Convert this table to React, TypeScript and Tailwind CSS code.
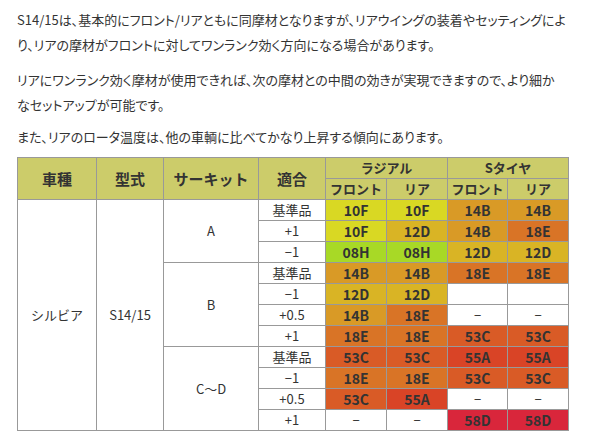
import React from "react";

type Row = { fit: string; cells: string[] };
type Group = { circuit: string; rows: Row[] };

const groups: Group[] = [
  {
    circuit: "A",
    rows: [
      { fit: "基準品", cells: ["10F", "10F", "14B", "14B"] },
      { fit: "+1", cells: ["10F", "12D", "14B", "18E"] },
      { fit: "−1", cells: ["08H", "08H", "12D", "12D"] },
    ],
  },
  {
    circuit: "B",
    rows: [
      { fit: "基準品", cells: ["14B", "14B", "18E", "18E"] },
      { fit: "−1", cells: ["12D", "12D", "", ""] },
      { fit: "+0.5", cells: ["14B", "18E", "−", "−"] },
      { fit: "+1", cells: ["18E", "18E", "53C", "53C"] },
    ],
  },
  {
    circuit: "C〜D",
    rows: [
      { fit: "基準品", cells: ["53C", "53C", "55A", "55A"] },
      { fit: "−1", cells: ["18E", "18E", "53C", "53C"] },
      { fit: "+0.5", cells: ["53C", "55A", "−", "−"] },
      { fit: "+1", cells: ["−", "−", "58D", "58D"] },
    ],
  },
];

// pad colours
const padBg: Record<string, string> = {
  "08H": "bg-[#a8d926]",
  "10F": "bg-[#d9d823]",
  "12D": "bg-[#d9b425]",
  "14B": "bg-[#d99a26]",
  "18E": "bg-[#d97426]",
  "53C": "bg-[#d95b26]",
  "55A": "bg-[#d94426]",
  "58D": "bg-[#d9263b]",
};

const totalRows = groups.reduce((n, g) => n + g.rows.length, 0);
const td = "border border-[#999] text-center h-[21px] p-0 leading-[20px]";
const th = "border border-[#999] bg-[#cccc6a] text-center font-bold p-0 h-[21px] leading-[20px]";

export default function App() {
  return (
    <div className="w-[615px] h-[441px] overflow-hidden bg-white text-[#333] font-['Noto_Sans_CJK_JP',sans-serif] text-[13px]">
      <div className="pl-[17px] pt-[7px] leading-[25px] [font-feature-settings:'palt']">
        <p className="mb-[10px]">
          S14/15は、基本的にフロント/リアともに同摩材となりますが、リアウイングの装着やセッティングによ
          <br />
          り、リアの摩材がフロントに対してワンランク効く方向になる場合があります。
        </p>
        <p className="mb-[7px]">
          リアにワンランク効く摩材が使用できれば、次の摩材との中間の効きが実現できますので、より細か
          <br />
          なセットアップが可能です。
        </p>
        <p className="mb-[8px]">また、リアのロータ温度は、他の車輌に比べてかなり上昇する傾向にあります。</p>
      </div>

      <table className="ml-[17px] w-[551px] table-fixed border-collapse text-[13px]">
        <colgroup>
          <col className="w-[79px]" />
          <col className="w-[67px]" />
          <col className="w-[95px]" />
          <col className="w-[67px]" />
          <col className="w-[61px]" />
          <col className="w-[61px]" />
          <col className="w-[60px]" />
          <col className="w-[61px]" />
        </colgroup>
        <thead>
          <tr>
            <th rowSpan={2} className={th + " text-[15px]"}>車種</th>
            <th rowSpan={2} className={th + " text-[15px]"}>型式</th>
            <th rowSpan={2} className={th + " text-[15px]"}>サーキット</th>
            <th rowSpan={2} className={th + " text-[15px]"}>適合</th>
            <th colSpan={2} className={th}>ラジアル</th>
            <th colSpan={2} className={th}>Sタイヤ</th>
          </tr>
          <tr>
            <th className={th}>フロント</th>
            <th className={th}>リア</th>
            <th className={th}>フロント</th>
            <th className={th}>リア</th>
          </tr>
        </thead>
        <tbody>
          {groups.map((g, gi) =>
            g.rows.map((r, ri) => (
              <tr key={g.circuit + ri}>
                {gi === 0 && ri === 0 && (
                  <>
                    <td rowSpan={totalRows} className={td}>シルビア</td>
                    <td rowSpan={totalRows} className={td}>S14/15</td>
                  </>
                )}
                {ri === 0 && (
                  <td rowSpan={g.rows.length} className={td}>
                    {g.circuit}
                  </td>
                )}
                <td className={td}>{r.fit}</td>
                {r.cells.map((c, ci) => (
                  <td
                    key={ci}
                    className={`${td} ${padBg[c] ? padBg[c] + " font-bold text-[14px]" : "bg-white"}`}
                  >
                    {c}
                  </td>
                ))}
              </tr>
            ))
          )}
        </tbody>
      </table>
    </div>
  );
}
